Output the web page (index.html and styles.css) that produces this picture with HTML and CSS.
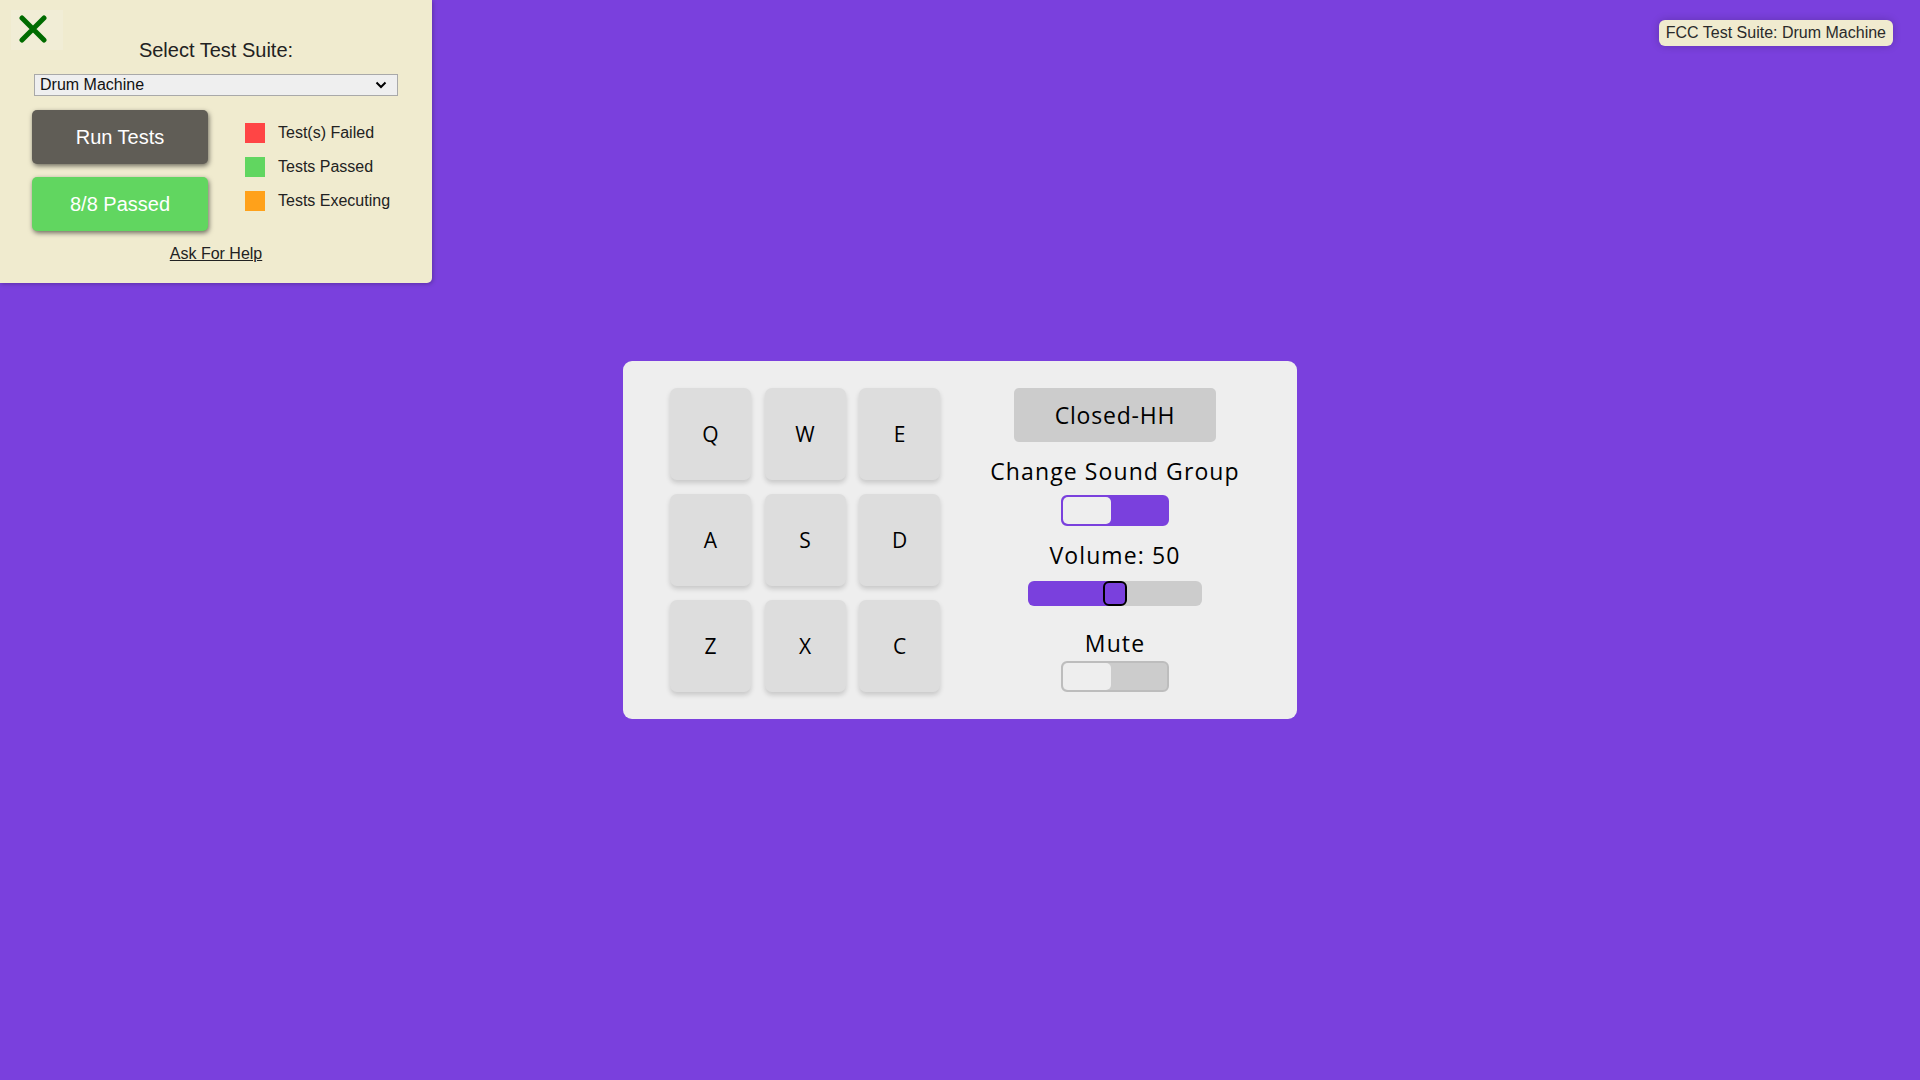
FILE: index.html
```html
<!DOCTYPE html>
<html lang="en">
<head>
<meta charset="utf-8">
<title>Drum Machine</title>
<link rel="stylesheet" href="styles.css">
</head>
<body>
<div class="page">
  <main class="drum-machine">
    <div class="pad-grid">
      <div class="drum-pad">Q</div>
      <div class="drum-pad">W</div>
      <div class="drum-pad">E</div>
      <div class="drum-pad">A</div>
      <div class="drum-pad">S</div>
      <div class="drum-pad">D</div>
      <div class="drum-pad">Z</div>
      <div class="drum-pad">X</div>
      <div class="drum-pad">C</div>
    </div>
    <div class="controls">
      <div class="display">Closed-HH</div>
      <p class="label label-group">Change Sound Group</p>
      <div class="toggle toggle-on"><span class="knob"></span></div>
      <p class="label label-volume">Volume: 50</p>
      <div class="slider"><span class="thumb"></span></div>
      <p class="label label-mute">Mute</p>
      <div class="toggle toggle-off"><span class="knob"></span></div>
    </div>
  </main>
</div>

<aside class="fcc-panel">
  <div class="close-box">
    <svg class="close-icon" width="28" height="28" viewBox="0 0 28 28">
      <path d="M3 3 L25 25 M25 3 L3 25" stroke="#006b00" stroke-width="5" stroke-linecap="round" fill="none"/>
    </svg>
  </div>
  <div class="suite-title">Select Test Suite:</div>
  <div class="suite-select">
    <span>Drum Machine</span>
    <svg width="12" height="8" viewBox="0 0 12 8"><path d="M1.5 1.5 L6 6 L10.5 1.5" stroke="#000" stroke-width="2" fill="none"/></svg>
  </div>
  <div class="panel-body">
    <div class="buttons">
      <div class="btn btn-run">Run Tests</div>
      <div class="btn btn-passed">8/8 Passed</div>
    </div>
    <ul class="legend">
      <li><span class="swatch swatch-red"></span>Test(s) Failed</li>
      <li><span class="swatch swatch-green"></span>Tests Passed</li>
      <li><span class="swatch swatch-orange"></span>Tests Executing</li>
    </ul>
  </div>
  <div class="help"><a href="#">Ask For Help</a></div>
</aside>

<div class="fcc-badge">FCC Test Suite: Drum Machine</div>
</body>
</html>
```

FILE: styles.css
```css
html, body {
  margin: 0;
  padding: 0;
}

body {
  background: #7a40dd;
  font-family: "Open Sans", "Liberation Sans", sans-serif;
  color: #000;
  width: 1920px;
  height: 1080px;
  overflow: hidden;
}

.page {
  height: 1080px;
  display: flex;
  align-items: center;
  justify-content: center;
}

.drum-machine {
  box-sizing: border-box;
  width: 674px;
  height: 358px;
  background: #eeeeee;
  border-radius: 9px;
  padding: 27px 47px;
  display: flex;
}

.pad-grid {
  width: 270px;
  display: grid;
  grid-template-columns: repeat(3, 81px);
  grid-template-rows: repeat(3, 92px);
  column-gap: 13.5px;
  row-gap: 14px;
}

.drum-pad {
  background: #dddddd;
  border-radius: 7px;
  box-shadow: 0 3px 5px rgba(0, 0, 0, 0.16);
  display: flex;
  align-items: center;
  justify-content: center;
  font-size: 21px;
  color: #000;
}

.controls {
  width: 270px;
  margin-left: 40px;
  display: flex;
  flex-direction: column;
  align-items: center;
}

.display {
  width: 202px;
  height: 54px;
  background: #cccccc;
  border-radius: 5px;
  display: flex;
  align-items: center;
  justify-content: center;
  font-size: 23px;
  letter-spacing: 0.8px;
}

.label {
  margin: 0;
  font-size: 23px;
  line-height: 30px;
  letter-spacing: 1.1px;
}

.label-group { margin-top: 14px; }
.label-volume { margin-top: 14px; }
.label-mute { margin-top: 22px; }

.toggle {
  box-sizing: border-box;
  width: 108px;
  height: 31px;
  border-radius: 6px;
  border: 2px solid;
  padding: 0;
  display: flex;
}

.toggle-on {
  margin-top: 9px;
  background: #7a40dd;
  border-color: #7a40dd;
}

.toggle-off {
  margin-top: 3px;
  background: #cccccc;
  border-color: #bdbdbd;
}

.knob {
  width: 48px;
  height: 27px;
  background: #eeeeee;
  border-radius: 5px;
}

.slider {
  margin-top: 11px;
  width: 174px;
  height: 25px;
  border-radius: 6px;
  background: linear-gradient(to right, #7a40dd 0, #7a40dd 87px, #cccccc 87px);
  display: flex;
}

.thumb {
  box-sizing: border-box;
  margin-left: 75px;
  width: 24px;
  height: 25px;
  border: 2px solid #000;
  border-radius: 6px;
  background: #7a40dd;
}

/* FCC test panel */
.fcc-panel {
  position: absolute;
  top: 0;
  left: 0;
  box-sizing: border-box;
  width: 432px;
  height: 283px;
  background: #f0ebcf;
  border-bottom-right-radius: 5px;
  box-shadow: 1px 1px 4px rgba(0, 0, 0, 0.25);
  font-family: "Liberation Sans", Arial, sans-serif;
  color: #222;
  padding: 10px 0 0 0;
}

.close-box {
  margin-left: 11px;
  width: 52px;
  height: 40px;
  background: #f1edd6;
  position: relative;
}

.close-icon {
  position: absolute;
  left: 8px;
  top: 5px;
}

.suite-title {
  margin-top: -12px;
  text-align: center;
  font-size: 20px;
  line-height: 24px;
  color: #222;
}

.suite-select {
  box-sizing: border-box;
  margin: 12px 0 0 34px;
  width: 364px;
  height: 22px;
  border: 1px solid #a9a9a9;
  background: #efefef;
  display: flex;
  align-items: center;
  justify-content: space-between;
  padding: 0 10px 0 5px;
  font-size: 16px;
  color: #111;
}

.panel-body {
  display: flex;
  margin-top: 14px;
  margin-left: 32px;
}

.buttons {
  display: flex;
  flex-direction: column;
  gap: 13px;
}

.btn {
  width: 176px;
  height: 54px;
  border-radius: 5px;
  color: #fff;
  font-size: 20px;
  display: flex;
  align-items: center;
  justify-content: center;
  box-shadow: 1px 2px 5px rgba(0, 0, 0, 0.55);
}

.btn-run { background: #605d56; }
.btn-passed { background: #61d660; }

.legend {
  list-style: none;
  margin: 13px 0 0 37px;
  padding: 0;
  display: flex;
  flex-direction: column;
  gap: 14px;
}

.legend li {
  display: flex;
  align-items: center;
  font-size: 16px;
  height: 20px;
  color: #222;
}

.swatch {
  width: 20px;
  height: 20px;
  margin-right: 13px;
}

.swatch-red { background: #ff4545; }
.swatch-green { background: #61d660; }
.swatch-orange { background: #ffa11a; }

.help {
  margin-top: 14px;
  text-align: center;
  font-size: 16px;
}

.help a {
  color: #222;
  text-decoration: underline;
}

.fcc-badge {
  position: absolute;
  top: 20px;
  right: 27px;
  height: 26px;
  box-sizing: border-box;
  padding: 0 7px;
  display: flex;
  align-items: center;
  background: #f0ebcf;
  border-radius: 6px;
  box-shadow: 0 0 8px rgba(0, 0, 0, 0.2);
  font-family: "Liberation Sans", Arial, sans-serif;
  font-size: 16px;
  color: #2a2a2a;
}
```
